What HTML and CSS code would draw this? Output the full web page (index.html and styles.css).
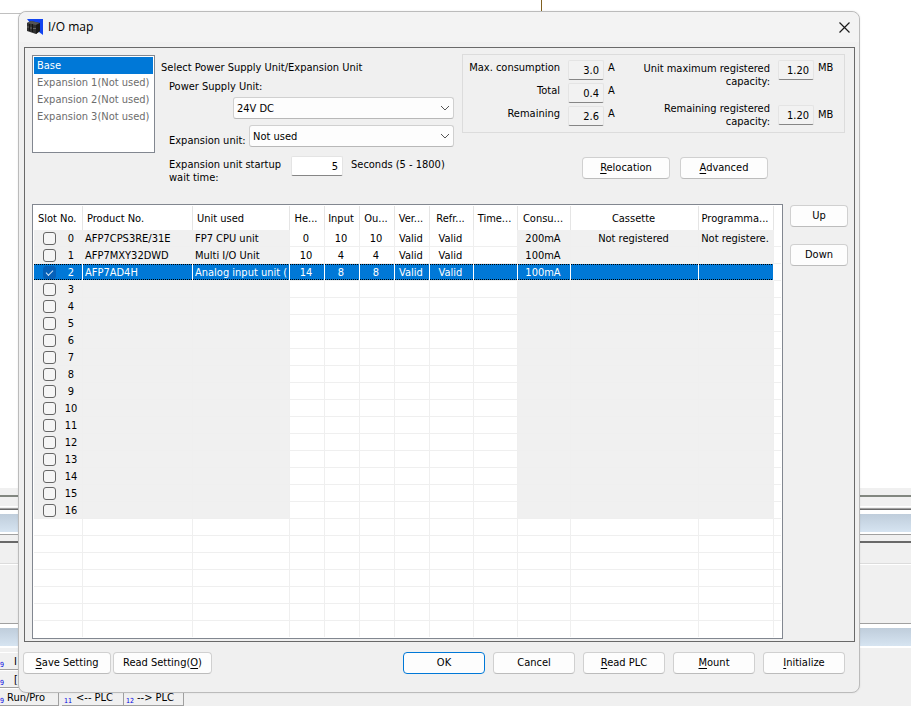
FILE: index.html
```html
<!DOCTYPE html>
<html lang="en">
<head>
    <meta charset="UTF-8">
    <meta name="viewport" content="width=device-width, initial-scale=1.0">
    <title>I/O map</title>
    <link rel="stylesheet" href="styles.css">
</head>
<body>
    <!-- main window behind the dialog -->
    <div class="app">
        <div class="workspace">
            <div class="sheet"></div>
        </div>
        <div class="splitter"></div>
        <div class="dock-edge"></div>
        <div class="dock-title"></div>
        <div class="dock-tabs"></div>
        <div class="dock-head"></div>
        <div class="dock-body"></div>
        <div class="dock-title"></div>
        <div class="keys">
            <div class="key-row">
                <span class="key short"><sub>9</sub>I</span>
            </div>
            <div class="key-row">
                <span class="key short"><sub>9</sub>[</span>
            </div>
            <div class="key-row">
                <span class="key"><sub>9</sub>Run/Pro</span>
                <span class="key"><sub>11</sub>&lt;-- PLC</span>
                <span class="key"><sub>12</sub>--&gt; PLC</span>
            </div>
        </div>
    </div>

    <div class="dialog" role="dialog" aria-labelledby="dialog-title">
        <header class="titlebar">
            <svg class="app-icon" width="16" height="16" viewBox="0 0 16 16" aria-hidden="true">
                <path d="M0 0H16V16L12 13L6 8Z" fill="#1244f0"/>
                <path d="M0 4L4 2L13 4V12L9 15L0 12Z" fill="#303030"/>
                <path d="M0 4L4 2L13 4L9 6Z" fill="#555"/>
                <path d="M2.5 5V12M5.5 5V13" stroke="#151515" fill="none"/>
                <path d="M9 6L13 4V12L9 15Z" fill="#1a1a1a"/>
                <path d="M0 8H2M3 9H5M6 9.5H9" stroke="#666" fill="none"/>
            </svg>
            <h1 id="dialog-title">I/O map</h1>
            <button class="close" type="button" aria-label="Close">
                <svg width="11" height="11" viewBox="0 0 11 11" aria-hidden="true">
                    <path d="M0.5 0.5L10.5 10.5M10.5 0.5L0.5 10.5" stroke="#1a1a1a" stroke-width="1.2" fill="none"/>
                </svg>
            </button>
        </header>

        <main class="panel">
            <div class="top">
                <ul class="bases">
                    <li class="active">Base</li>
                    <li>Expansion 1(Not used)</li>
                    <li>Expansion 2(Not used)</li>
                    <li>Expansion 3(Not used)</li>
                </ul>

                <section class="power">
                    <h2>Select Power Supply Unit/Expansion Unit</h2>
                    <div class="power-fields">
                        <label for="psu">Power Supply Unit:</label>
                        <div class="select psu">
                            <select id="psu"><option>24V DC</option></select>
                            <svg width="10" height="6" viewBox="0 0 10 6" aria-hidden="true"><path d="M1 1L5 5L9 1" stroke="#555" fill="none"/></svg>
                        </div>
                        <div class="expansion">
                            <label for="expansion">Expansion unit:</label>
                            <div class="select">
                                <select id="expansion"><option>Not used</option></select>
                                <svg width="10" height="6" viewBox="0 0 10 6" aria-hidden="true"><path d="M1 1L5 5L9 1" stroke="#555" fill="none"/></svg>
                            </div>
                        </div>
                        <div class="wait">
                            <label for="wait">Expansion unit startup<br>wait time:</label>
                            <input class="field" id="wait" type="text" value="5">
                            <span>Seconds (5 - 1800)</span>
                        </div>
                    </div>
                </section>

                <section class="summary">
                    <div class="totals">
                        <div class="current">
                            <label for="max">Max. consumption</label>
                            <input class="field" id="max" type="text" value="3.0" readonly>
                            <span>A</span>
                            <label for="total">Total</label>
                            <input class="field" id="total" type="text" value="0.4" readonly>
                            <span>A</span>
                            <label for="remaining">Remaining</label>
                            <input class="field" id="remaining" type="text" value="2.6" readonly>
                            <span>A</span>
                        </div>
                        <div class="capacity">
                            <div class="capacity-row">
                                <label for="cap-max">Unit maximum registered<br>capacity:</label>
                                <input class="field" id="cap-max" type="text" value="1.20" readonly>
                                <span>MB</span>
                            </div>
                            <div class="capacity-row middle">
                                <label for="cap-left">Remaining registered<br>capacity:</label>
                                <input class="field" id="cap-left" type="text" value="1.20" readonly>
                                <span>MB</span>
                            </div>
                        </div>
                    </div>
                    <div class="actions">
                        <button class="btn wide" type="button"><u>R</u>elocation</button>
                        <button class="btn wide" type="button"><u>A</u>dvanced</button>
                    </div>
                </section>
            </div>

            <div class="bottom">
                <div class="table-box">
                    <table>
                        <colgroup>
                            <col class="c-slot"><col class="c-product"><col class="c-unit">
                            <col class="c-num"><col class="c-num"><col class="c-num"><col class="c-num">
                            <col class="c-time"><col class="c-time"><col class="c-cons">
                            <col class="c-cassette"><col class="c-prog"><col>
                        </colgroup>
                        <thead>
                            <tr>
                                <th class="left">Slot No.</th>
                                <th class="left">Product No.</th>
                                <th class="left">Unit used</th>
                                <th>He...</th>
                                <th>Input</th>
                                <th>Ou...</th>
                                <th>Ver...</th>
                                <th>Refr...</th>
                                <th>Time...</th>
                                <th>Consu...</th>
                                <th>Cassette</th>
                                <th>Programma...</th>
                                <th></th>
                            </tr>
                        </thead>
                        <tbody id="slots"></tbody>
                    </table>
                </div>
                <div class="move">
                    <button class="btn" type="button">Up</button>
                    <button class="btn" type="button">Down</button>
                </div>
            </div>
        </main>

        <footer class="footer">
            <button class="btn wide" type="button"><u>S</u>ave Setting</button>
            <button class="btn read" type="button">Read Setting(<u>O</u>)</button>
            <div class="confirm">
                <button class="btn primary" type="button">OK</button>
                <button class="btn" type="button">Cancel</button>
                <button class="btn" type="button"><u>R</u>ead PLC</button>
                <button class="btn" type="button"><u>M</u>ount</button>
                <button class="btn" type="button"><u>I</u>nitialize</button>
            </div>
        </footer>
    </div>

    <script>
        const slotCount = 17;
        const emptyRows = 7;
        const columns = 12;
        const selected = 2;

        // product, unit, head, input, output, verify, refresh, time, consumption, cassette, program memory
        const units = [
            ["AFP7CPS3RE/31E", "FP7 CPU unit", "0", "10", "10", "Valid", "Valid", "", "200mA", "Not registered", "Not registere."],
            ["AFP7MXY32DWD", "Multi I/O Unit", "10", "4", "4", "Valid", "Valid", "", "100mA", "", ""],
            ["AFP7AD4H", "Analog input unit (", "14", "8", "8", "Valid", "Valid", "", "100mA", "", ""]
        ];

        const body = document.getElementById("slots");

        function addCell(row, text, className) {
            const cell = row.insertCell();
            cell.textContent = text;
            cell.className = className;
            return cell;
        }

        for (let slot = 0; slot < slotCount; slot++) {
            const row = body.insertRow();
            if (slot === selected) row.className = "selected";

            const first = addCell(row, "", "locked");
            const checked = slot === selected ? " checked" : "";
            first.innerHTML = `<label class="slot"><input type="checkbox"${checked}><span>${slot}</span></label>`;

            for (let i = 0; i < columns - 1; i++) {
                const locked = i < 2 || i > 7;
                const classes = [];
                if (locked) classes.push("locked");
                if (i < 2) classes.push("left");
                addCell(row, units[slot] ? units[slot][i] : "", classes.join(" "));
            }
            addCell(row, "", "rest");
        }

        for (let n = 0; n < emptyRows; n++) {
            const row = body.insertRow();
            for (let i = 0; i < columns; i++) addCell(row, "", "");
            addCell(row, "", "rest");
        }
    </script>
</body>
</html>
```

FILE: styles.css
```css
:root {
    --face: #f0f0f0;
    --window: #ffffff;
    --frame: #696969;
    --box: #828790;
    --line: #efefef;
    --accent: #0078d7;
}

* {
    box-sizing: border-box;
}

body {
    margin: 0;
    padding: 11px 51px 13px 18px;
    font-family: "DejaVu Sans Condensed", Tahoma, sans-serif;
    font-size: 11px;
    line-height: 13px;
    color: #000;
    background: var(--face);
}

button, input, select {
    font: inherit;
    color: inherit;
}

/* main window */
.app {
    position: absolute;
    inset: 0;
    display: flex;
    flex-direction: column;
    overflow: hidden;
    background: var(--face);
}

.workspace {
    flex: 1;
    background: var(--window);
}

.sheet {
    width: 542px;
    height: 14px;
    border-right: 1px solid #806020;
    border-bottom: 1px solid #c0c0c0;
}

.splitter {
    height: 18px;
    border-top: 7px solid var(--face);
    background: linear-gradient(#828780 2px, var(--face) 2px);
}

.dock-edge {
    height: 4px;
    border-top: 1px solid #fff;
    border-bottom: 1px solid var(--frame);
    background: linear-gradient(var(--face) 1px, #a0a0a0 1px);
}

.dock-title {
    height: 24px;
    border-top: 4px solid #fff;
    border-bottom: 2px solid #fff;
    background: linear-gradient(#bfcddb, #d6e4f1);
}

.dock-tabs {
    height: 9px;
    border-top: 1px solid #a0a0a0;
    border-bottom: 2px solid var(--frame);
}

.dock-head {
    height: 22px;
    border-bottom: 1px solid #fff;
    background: linear-gradient(var(--face) 20px, #dcdcdc 20px);
}

.dock-body {
    height: 59px;
    border-bottom: 1px solid #a0a0a0;
}

.keys {
    height: 58px;
    padding-top: 4px;
}

.key-row {
    display: flex;
    height: 18px;
}

.key {
    display: flex;
    gap: 3px;
    width: 59px;
    padding-top: 2px;
    border-top: 1px solid #fff;
    border-right: 1px solid #a0a0a0;
    border-bottom: 1px solid #a0a0a0;
    white-space: nowrap;
}

.key.short {
    gap: 10px;
}

.key + .key {
    gap: 4px;
    width: 62px;
    margin-left: 3px;
    padding-left: 2px;
}

.key + .key + .key {
    gap: 3px;
    width: 60px;
    margin-left: 0;
}

.key sub {
    align-self: end;
    font-size: 7px;
    line-height: 8px;
    color: #0000e0;
}

/* dialog */
.dialog {
    position: relative;
    border: 1px solid #bbb;
    border-radius: 8px;
    background: var(--face);
    box-shadow: 0 0 2px rgba(0, 0, 0, 0.1);
}

.titlebar {
    display: flex;
    align-items: center;
    height: 30px;
    padding: 0 9px 0 8px;
    border-radius: 8px 8px 0 0;
    background: #f3f3f3;
}

.titlebar h1 {
    flex: 1;
    margin: 0 0 0 5px;
    font: 12px/16px "Open Sans", "Segoe UI", sans-serif;
}

.close {
    display: flex;
    padding: 0;
    border: 0;
    background: none;
}

.panel {
    margin: 5px 4px 0 5px;
    padding: 6px 6px 2px 7px;
    border: 1px solid var(--frame);
}

.top {
    display: grid;
    grid-template-columns: 123px 1fr 383px;
    min-height: 150px;
    padding-right: 3px;
}

.bases {
    height: 98px;
    margin: 1px 0 0;
    padding: 1px;
    list-style: none;
    border: 1px solid var(--box);
    background: var(--window);
    color: #6d6d6d;
}

.bases li {
    padding: 2px 3px;
    white-space: nowrap;
}

.bases .active {
    background: var(--accent);
    color: #fff;
}

.power {
    padding: 7px 8px 0 6px;
    white-space: nowrap;
}

.power h2 {
    margin: 0 0 6px;
    font: inherit;
}

.power-fields {
    display: flex;
    flex-direction: column;
    padding-left: 8px;
}

.select {
    position: relative;
    flex: 1;
}

.select select {
    display: block;
    appearance: none;
    width: 100%;
    height: 22px;
    padding: 0 20px 0 3px;
    border: 1px solid #d0d0d0;
    border-bottom-color: #b8b8b8;
    border-radius: 3px;
    background: #fdfdfd;
}

.select svg {
    position: absolute;
    top: 8px;
    right: 4px;
}

.psu {
    margin: 4px 0 6px 64px;
}

.expansion {
    display: flex;
    align-items: end;
    gap: 2px;
}

.expansion label {
    width: 78px;
}

.wait {
    display: flex;
    align-items: start;
    gap: 8px;
    margin-top: 9px;
}

.wait label {
    width: 114px;
    padding-top: 2px;
}

.wait span {
    padding-top: 2px;
}

.field {
    width: 36px;
    height: 20px;
    padding: 0 4px;
    border: 1px solid #e4e4e4;
    border-bottom-color: #868686;
    border-radius: 2px;
    background: #f2f2f2;
    text-align: right;
}

.wait .field {
    width: 52px;
    background: var(--window);
}

.totals {
    display: flex;
    height: 79px;
    padding: 5px 8px 0 0;
    border: 1px solid #dcdcdc;
    white-space: nowrap;
    text-align: right;
}

.current {
    display: grid;
    grid-template-columns: 97px 36px 8px;
    grid-auto-rows: 20px;
    gap: 3px 8px;
    line-height: 16px;
}

.current span,
.capacity-row span {
    margin-left: -4px;
    text-align: left;
}

.capacity {
    flex: 1;
}

.capacity-row {
    display: flex;
    align-items: start;
    justify-content: end;
    gap: 8px;
    height: 28px;
    margin-bottom: 14px;
}

.capacity-row label {
    padding-top: 2px;
}

.capacity-row span {
    line-height: 16px;
    width: 18px;
}

.middle {
    align-items: center;
    height: 26px;
    margin: 0;
}

.middle label {
    padding: 0;
}

.actions {
    display: flex;
    justify-content: end;
    gap: 10px;
    margin-top: 24px;
    padding-right: 77px;
}

.btn {
    width: 82px;
    height: 22px;
    padding: 0 0 1px;
    border: 1px solid #d0d0d0;
    border-bottom-color: #bcbcbc;
    border-radius: 4px;
    background: #fdfdfd;
    white-space: nowrap;
}

.btn u {
    text-underline-offset: 2px;
}

.wide {
    width: 88px;
}

.read {
    width: 99px;
}

.primary {
    border-color: var(--accent);
}

.bottom {
    display: flex;
    gap: 7px;
}

.table-box {
    flex: 1;
    padding: 1px;
    border: 1px solid var(--box);
    background: var(--window);
}

.move {
    display: flex;
    flex-direction: column;
    gap: 17px;
    padding-top: 1px;
}

.move .btn {
    width: 58px;
}

/* slot table */
table {
    width: 100%;
    table-layout: fixed;
    border-spacing: 0;
}

.c-slot { width: 49px; }
.c-product { width: 110px; }
.c-unit { width: 97px; }
.c-num { width: 35px; }
.c-time { width: 44px; }
.c-cons { width: 53px; }
.c-cassette { width: 128px; }
.c-prog { width: 75px; }

th, td {
    overflow: hidden;
    white-space: nowrap;
    text-align: center;
    border-right: 1px solid var(--line);
}

th {
    height: 24px;
    padding: 0 2px 0 0;
    border-color: #e5e5e5;
    font-weight: normal;
}

td {
    height: 17px;
    padding: 0 4px 0 2px;
    border-bottom: 1px solid var(--line);
}

th.left {
    padding-left: 4px;
    text-align: left;
}

td.left {
    padding: 0 0 0 2px;
    text-align: left;
}

td:first-child {
    padding: 0;
}

th:last-child,
.rest {
    padding: 0;
    border-right: 0;
}

tr:last-child td {
    height: 16px;
    border-bottom: 0;
}

.locked {
    background: var(--face);
}

/* focus dots run along the top and bottom of the selected row */
.selected td:not(.rest) {
    color: #fff;
    background-color: var(--accent);
    background-image: repeating-linear-gradient(90deg, #000 0 1px, transparent 1px 2px), repeating-linear-gradient(90deg, #000 0 1px, transparent 1px 2px);
    background-size: 100% 1px;
    background-position: top, bottom;
    background-repeat: no-repeat;
    background-clip: padding-box;
    border-right-color: #fff;
}

.slot {
    display: flex;
    align-items: center;
    padding-left: 9px;
}

.slot span {
    flex: 1;
    padding-left: 4px;
    text-align: center;
}

.slot input {
    appearance: none;
    flex: none;
    width: 13px;
    height: 13px;
    margin: 0;
    border: 1px solid #666;
    border-radius: 3px;
    background: #f5f5f5;
}

.slot input:checked {
    border-color: #0560b8;
    background: #0560b8;
}

.slot input:checked::before {
    content: "";
    display: block;
    width: 6px;
    height: 3px;
    margin: 3px 0 0 2px;
    border: solid #cfe4f7;
    border-width: 0 0 1px 1px;
    transform: rotate(-45deg);
}

/* dialog buttons */
.footer {
    display: flex;
    gap: 2px;
    padding: 10px 14px 18px 4px;
}

.confirm {
    display: flex;
    flex: 1;
    justify-content: end;
    gap: 8px;
}
```
